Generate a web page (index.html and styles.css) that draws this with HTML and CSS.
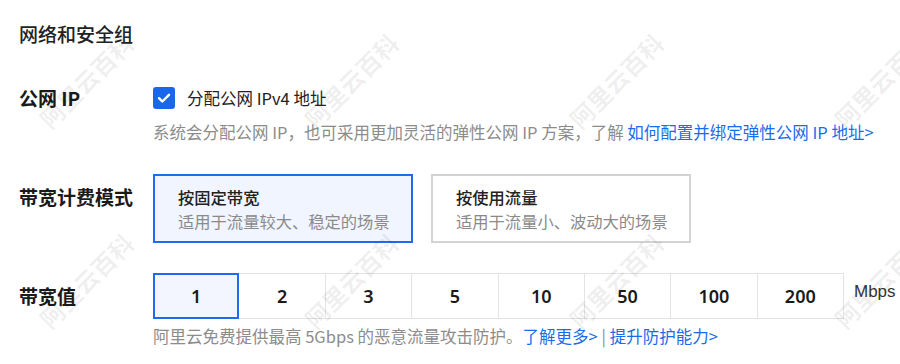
FILE: index.html
```html
<!DOCTYPE html>
<html lang="zh-CN">
  <head>
    <meta charset="UTF-8" />
    <meta name="viewport" content="width=device-width, initial-scale=1.0" />
    <title>网络和安全组</title>
    <link rel="stylesheet" href="styles.css">
  </head>
  <body>
    <div class="page">
      <h3 class="section-title">网络和安全组</h3>

      <div class="form-row row-ip">
        <div class="form-label">公网 IP</div>
        <div class="form-body">
          <label class="checkbox">
            <span class="checkbox-box">
              <svg viewBox="0 0 22 22" width="22" height="22">
                <path d="M6 11.2l3.3 3.3L16 7.8" fill="none" stroke="#fff" stroke-width="2.4" stroke-linecap="round" stroke-linejoin="round" />
              </svg>
            </span>
            <span class="checkbox-text">分配公网 IPv4 地址</span>
          </label>
          <p class="hint">系统会分配公网 IP，也可采用更加灵活的弹性公网 IP 方案，了解 <a href="#">如何配置并绑定弹性公网 IP 地址&gt;</a></p>
        </div>
      </div>

      <div class="form-row row-billing">
        <div class="form-label">带宽计费模式</div>
        <div class="cards">
          <div class="card active">
            <div class="card-title">按固定带宽</div>
            <div class="card-desc">适用于流量较大、稳定的场景</div>
          </div>
          <div class="card">
            <div class="card-title">按使用流量</div>
            <div class="card-desc">适用于流量小、波动大的场景</div>
          </div>
        </div>
      </div>

      <div class="form-row row-bandwidth">
        <div class="form-label">带宽值</div>
        <div class="form-body">
          <div class="bw-line">
            <div class="segments">
              <div class="seg active">1</div>
              <div class="seg">2</div>
              <div class="seg">3</div>
              <div class="seg">5</div>
              <div class="seg">10</div>
              <div class="seg">50</div>
              <div class="seg">100</div>
              <div class="seg">200</div>
            </div>
            <span class="unit">Mbps</span>
          </div>
          <p class="hint hint-small">阿里云免费提供最高 5Gbps 的恶意流量攻击防护。<a href="#">了解更多&gt;</a> <span class="sep">|</span> <a href="#">提升防护能力&gt;</a></p>
        </div>
      </div>
    </div>

    <!-- watermark overlay -->
    <div class="watermarks">
      <div class="watermark-grid">
        <span>阿里云百科</span>
        <span>阿里云百科</span>
        <span>阿里云百科</span>
        <span>阿里云百科</span>
        <span>阿里云百科</span>
        <span>阿里云百科</span>
        <span>阿里云百科</span>
        <span>阿里云百科</span>
      </div>
    </div>
  </body>
</html>
```

FILE: styles.css
```css
/* base */
body {
  margin: 0;
  font-family: "Noto Sans CJK SC", "Noto Sans", sans-serif;
  color: #222;
  background: #fff;
  position: relative;
  overflow: hidden;
  height: 364px;
}

.page {
  padding: 21px 0 0 19px;
}

.section-title {
  margin: 0;
  font-size: 19px;
  line-height: 26px;
  font-weight: 500;
  color: #222;
}

.form-row {
  display: flex;
}

.form-label {
  width: 134px;
  flex-shrink: 0;
  font-size: 19px;
  line-height: 22px;
  font-weight: 700;
  color: #1a1a1a;
}

.hint {
  margin: 12px 0 0;
  font-size: 16.5px;
  line-height: 22px;
  color: #8c8c8c;
}

.hint a {
  color: #1a6bed;
  text-decoration: none;
}

.hint .sep {
  color: #8c8c8c;
}

/* public ip */
.row-ip {
  margin-top: 40px;
}

.checkbox {
  display: flex;
  align-items: center;
  gap: 12px;
}

.checkbox-box {
  width: 22px;
  height: 22px;
  border-radius: 3px;
  background: #1b67ea;
  display: flex;
}

.checkbox-text {
  font-size: 16.5px;
  line-height: 22px;
  color: #222;
}

/* billing cards */
.row-billing {
  margin-top: 31px;
}

.row-billing .form-label {
  margin-top: 12px;
}

.cards {
  display: flex;
  gap: 18px;
}

.card {
  box-sizing: border-box;
  width: 260px;
  height: 69px;
  padding: 9px 18px 0 23px;
  border: 2px solid #d3d3d3;
  background: #fff;
}

.card.active {
  border-color: #1f6bf0;
  background: #f1f5ff;
}

.card-title {
  font-size: 16.3px;
  line-height: 24px;
  font-weight: 500;
  color: #222;
}

.card-desc {
  font-size: 16.3px;
  line-height: 24px;
  color: #8a8a8a;
}

/* bandwidth */
.row-bandwidth {
  margin-top: 30px;
}

.row-bandwidth .form-label {
  margin-top: 12px;
}

.bw-line {
  display: flex;
  align-items: center;
  gap: 10px;
}

.segments {
  display: grid;
  grid-template-columns: repeat(8, 1fr);
  width: 691px;
  height: 46px;
}

.seg {
  box-sizing: border-box;
  display: flex;
  align-items: center;
  justify-content: center;
  border: 1px solid #e4e4e4;
  margin-left: -1px;
  font-family: "Noto Sans", sans-serif;
  font-size: 18px;
  font-weight: 600;
  color: #1a1a1a;
  background: #fff;
}

.seg:first-child {
  margin-left: 0;
}

.seg.active {
  position: relative;
  z-index: 1;
  border: 2px solid #1f6bf0;
  background: #f3f6ff;
}

.unit {
  font-family: "Liberation Sans", Arial, sans-serif;
  font-size: 17px;
  color: #333;
  margin-bottom: 8px;
}

.hint-small {
  margin-top: 6px;
}

/* watermark */
.watermarks {
  position: absolute;
  inset: 0;
  overflow: hidden;
  pointer-events: none;
  z-index: 5;
}

.watermark-grid {
  display: grid;
  grid-template-columns: repeat(4, 265px);
  grid-template-rows: repeat(2, 200px);
  margin: -20px 0 0 -47px;
}

.watermarks span {
  display: flex;
  align-items: center;
  justify-content: center;
  transform: rotate(-45deg);
  font-size: 24px;
  font-weight: 700;
  color: rgba(0, 0, 0, 0.07);
  white-space: nowrap;
}
```
